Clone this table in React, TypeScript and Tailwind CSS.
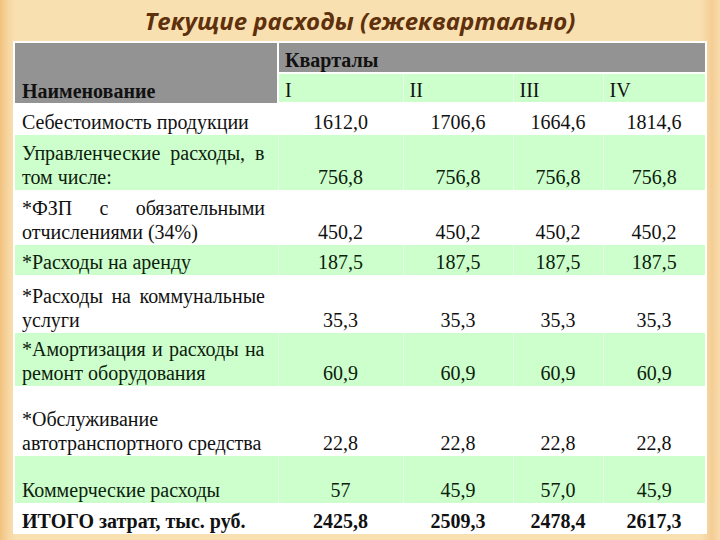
import React from "react";

type Row = {
  name: string;
  values: string[];
  h: string;
  green?: boolean;
  bold?: boolean;
};

const rows: Row[] = [
  { name: "Себестоимость продукции", values: ["1612,0", "1706,6", "1664,6", "1814,6"], h: "h-[32px]" },
  { name: "Управленческие расходы, в том числе:", values: ["756,8", "756,8", "756,8", "756,8"], h: "h-[55px]", green: true },
  { name: "*ФЗП с обязательными отчислениями (34%)", values: ["450,2", "450,2", "450,2", "450,2"], h: "h-[55px]" },
  { name: "*Расходы на аренду", values: ["187,5", "187,5", "187,5", "187,5"], h: "h-[30px]", green: true },
  { name: "*Расходы на коммунальные услуги", values: ["35,3", "35,3", "35,3", "35,3"], h: "h-[58px]" },
  { name: "*Амортизация и расходы на ремонт оборудования", values: ["60,9", "60,9", "60,9", "60,9"], h: "h-[53px]", green: true },
  { name: "*Обслуживание автотранспортного средства", values: ["22,8", "22,8", "22,8", "22,8"], h: "h-[70px]" },
  { name: "Коммерческие расходы", values: ["57", "45,9", "57,0", "45,9"], h: "h-[47px]", green: true },
  { name: "ИТОГО затрат, тыс. руб.", values: ["2425,8", "2509,3", "2478,4", "2617,3"], h: "h-[31px]", bold: true },
];

export default function App() {
  return (
    <div className="w-[720px] h-[540px] overflow-hidden bg-[linear-gradient(to_right,#f2c27e_0px,#f7d8a4_9px,#f9e0b1_16px,#f9e0b1_700px,#f4cd95_712px,#f8dcaa_720px)]">
      {/* заголовок */}
      <div className="h-[41px] pt-[5px] text-center">
        <h1 className="font-['Open_Sans',sans-serif] italic font-bold text-[24px] leading-[32px] text-[#5e300c]">
          Текущие расходы (ежеквартально)
        </h1>
      </div>

      {/* таблица расходов */}
      <div className="ml-[13px] w-[694px] border-2 border-b-0 border-white">
        <table className="table-fixed border-collapse w-[690px] font-['Liberation_Serif',serif] text-[20px] leading-[24px] text-[#111]">
          <colgroup>
            <col className="w-[263px]" />
            <col className="w-[125px]" />
            <col className="w-[110px]" />
            <col className="w-[90px]" />
            <col className="w-[102px]" />
          </colgroup>
          <thead>
            <tr className="h-[30px]">
              <th
                rowSpan={2}
                className="bg-[#939393] text-left align-bottom font-bold pl-[7px] pb-0 border-r-2 border-white"
              >
                Наименование
              </th>
              <th
                colSpan={4}
                className="bg-[#939393] text-left align-bottom font-bold pl-[6px] pb-0 border-b-2 border-white"
              >
                Кварталы
              </th>
            </tr>
            <tr className="h-[30px]">
              {["I", "II", "III", "IV"].map((q, i) => (
                <th
                  key={q}
                  className={`bg-[#ccffcc] text-left align-bottom font-normal pl-[6px] pb-0 border-b-2 border-white ${
                    i > 0 ? "border-l border-l-[#e4fbe4]" : ""
                  }`}
                >
                  {q}
                </th>
              ))}
            </tr>
          </thead>
          <tbody>
            {rows.map((r) => (
              <tr
                key={r.name}
                className={`${r.h} ${r.green ? "bg-[#ccffcc] text-[#0c200c]" : "bg-white"}`}
              >
                <td
                  className={`align-bottom text-justify pl-[7px] pr-[13px] pb-[1px] ${r.bold ? "font-bold" : ""}`}
                >
                  {r.name}
                </td>
                {r.values.map((v, i) => (
                  <td
                    key={i}
                    className={`align-bottom text-center pb-[1px] ${r.bold ? "font-bold" : ""} ${
                      r.green ? "border-l border-[#e4fbe4]" : ""
                    }`}
                  >
                    {v}
                  </td>
                ))}
              </tr>
            ))}
          </tbody>
        </table>
      </div>
    </div>
  );
}
